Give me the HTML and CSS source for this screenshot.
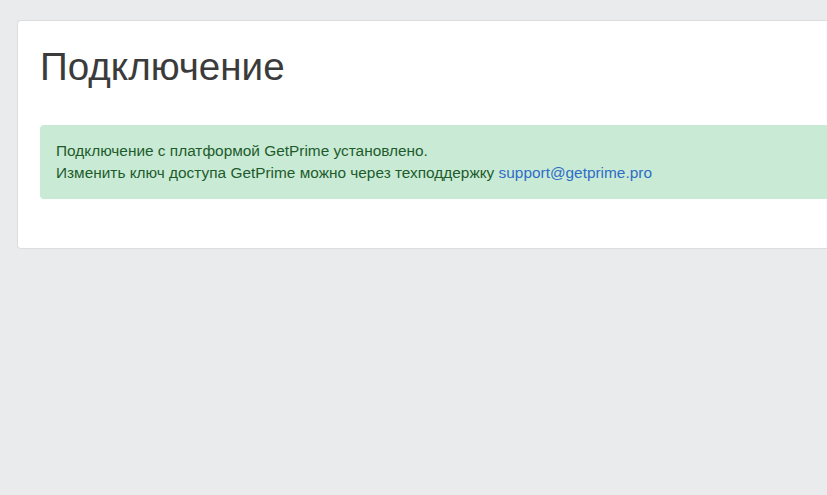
FILE: index.html
```html
<!DOCTYPE html>
<html lang="ru">
<head>
<meta charset="utf-8">
<link rel="stylesheet" href="styles.css">
</head>
<body>
<div class="page">
  <section class="card">
    <h1 class="title">Подключение</h1>
    <div class="alert">
      <p>Подключение с платформой GetPrime установлено.</p>
      <p>Изменить ключ доступа GetPrime можно через техподдержку <a href="#" class="link">support@getprime.pro</a></p>
    </div>
  </section>
</div>
</body>
</html>
```
FILE: styles.css
```css
html, body {
  margin: 0;
  padding: 0;
  background: #eaebed;
  font-family: "Liberation Sans", Arial, sans-serif;
}
.page {
  padding: 20px 0 0 17px;
  overflow: hidden;
  height: 475px;
}
.card {
  background: #fff;
  border: 1px solid #dcdde1;
  border-right: none;
  border-radius: 4px 0 0 4px;
  padding: 22px 0 49px 22px;
}
.title {
  margin: 0 0 34px 0;
  font-weight: 400;
  font-size: 38.6px;
  line-height: 48px;
  color: #3b3b3b;
}
.alert {
  background: #c9ebd5;
  border-radius: 4px 0 0 4px;
  padding: 15px 16px;
  color: #1e5b2c;
  font-size: 15.4px;
  line-height: 22px;
}
.alert p {
  margin: 0;
}
.link {
  color: #2f6cc8;
  text-decoration: none;
}
```
